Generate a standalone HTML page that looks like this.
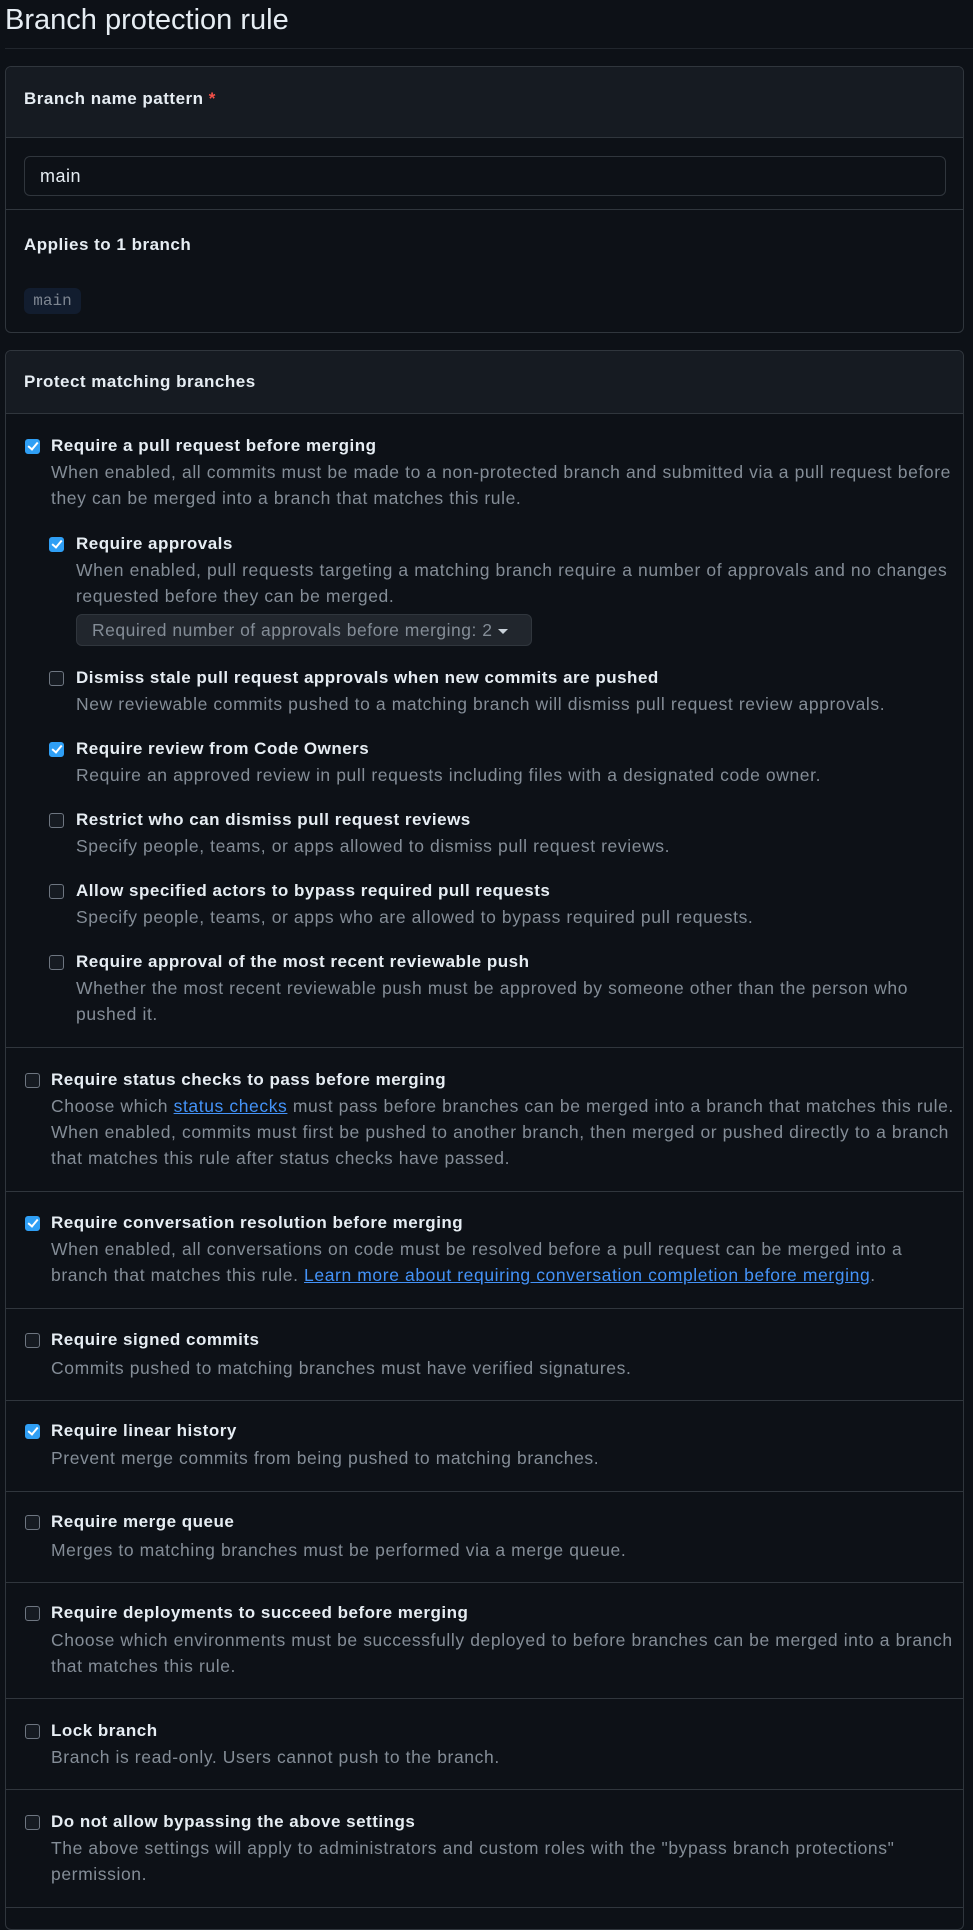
<!DOCTYPE html>
<html><head><meta charset="utf-8"><style>
*{box-sizing:border-box;margin:0;padding:0}
body{width:973px;height:1911px;background:#0d1117;color:#e6edf3;font-family:"Liberation Sans",sans-serif;position:relative;overflow:hidden}
.a{position:absolute;white-space:nowrap}
.t{font-size:17px;font-weight:bold;line-height:26px;letter-spacing:.5px}
.d{font-size:17.5px;color:#848d97;line-height:26px;letter-spacing:.6px}
.cb{position:absolute;width:15px;height:15px;border-radius:3px;border:1.5px solid #6e7681;background:#161b22}
.cb.on{background:#2f9ff5;border-color:#2f9ff5}
.cb.on::after{content:"";position:absolute;left:4px;top:0px;width:4px;height:8px;border:solid #fff;border-width:0 2px 2px 0;transform:rotate(40deg)}
.sep{position:absolute;left:6px;width:957px;height:1px;background:#30363d}
a{color:#4493f8;text-decoration:underline}
</style></head><body>
<div class="a" style="left:5px;top:0;font-size:29px;line-height:40px">Branch protection rule</div>
<div class="sep" style="top:48px;left:5px;width:968px;background:#21262d"></div>

<div style="position:absolute;left:5px;top:66px;width:959px;height:267px;border:1px solid #30363d;border-radius:6px;overflow:hidden">
 <div style="height:71px;background:#161b22;border-bottom:1px solid #30363d"></div>
 <div style="position:absolute;top:142px;left:0;right:0;height:1px;background:#30363d"></div>
</div>
<div class="a t" style="left:24px;top:86px;font-size:17px">Branch name pattern <span style="color:#f85149">*</span></div>
<div style="position:absolute;left:24px;top:156px;width:922px;height:40px;border:1px solid #30363d;border-radius:6px;background:#0d1117"></div>
<div class="a" style="left:40px;top:163px;font-size:18px;line-height:26px;letter-spacing:.5px">main</div>
<div class="a t" style="left:24px;top:232px">Applies to 1 branch</div>
<div class="a" style="left:24px;top:288px;width:57px;height:26px;background:#121d2f;border-radius:6px;font-family:'Liberation Mono',monospace;font-size:16px;color:#7d8590;line-height:26px;text-align:center">main</div>

<div style="position:absolute;left:5px;top:350px;width:959px;height:1580px;border:1px solid #30363d;border-radius:6px;overflow:hidden">
 <div style="height:63px;background:#161b22;border-bottom:1px solid #30363d"></div>
</div>
<div class="a t" style="left:24px;top:369px">Protect matching branches</div>

<div class="cb on" style="left:25px;top:439px"></div>
<div class="a t" style="left:51px;top:433px">Require a pull request before merging</div>
<div class="a d" style="left:51px;top:459px">When enabled, all commits must be made to a non-protected branch and submitted via a pull request before<br>they can be merged into a branch that matches this rule.</div>

<div class="cb on" style="left:49px;top:537px"></div>
<div class="a t" style="left:76px;top:531px">Require approvals</div>
<div class="a d" style="left:76px;top:557px">When enabled, pull requests targeting a matching branch require a number of approvals and no changes<br>requested before they can be merged.</div>
<div style="position:absolute;left:76px;top:614px;width:456px;height:32px;border:1px solid #30363d;border-radius:6px;background:#21262d"></div>
<div class="a" style="left:92px;top:617px;font-size:17.5px;line-height:26px;color:#848d97;letter-spacing:.5px">Required number of approvals before merging: 2 <span style="display:inline-block;border:5px solid transparent;border-top-color:#c9d1d9;border-bottom:0;vertical-align:middle"></span></div>

<div class="cb" style="left:49px;top:671px"></div>
<div class="a t" style="left:76px;top:665px">Dismiss stale pull request approvals when new commits are pushed</div>
<div class="a d" style="left:76px;top:691px">New reviewable commits pushed to a matching branch will dismiss pull request review approvals.</div>

<div class="cb on" style="left:49px;top:742px"></div>
<div class="a t" style="left:76px;top:736px">Require review from Code Owners</div>
<div class="a d" style="left:76px;top:762px">Require an approved review in pull requests including files with a designated code owner.</div>

<div class="cb" style="left:49px;top:813px"></div>
<div class="a t" style="left:76px;top:807px">Restrict who can dismiss pull request reviews</div>
<div class="a d" style="left:76px;top:833px">Specify people, teams, or apps allowed to dismiss pull request reviews.</div>

<div class="cb" style="left:49px;top:884px"></div>
<div class="a t" style="left:76px;top:878px">Allow specified actors to bypass required pull requests</div>
<div class="a d" style="left:76px;top:904px">Specify people, teams, or apps who are allowed to bypass required pull requests.</div>

<div class="cb" style="left:49px;top:955px"></div>
<div class="a t" style="left:76px;top:949px">Require approval of the most recent reviewable push</div>
<div class="a d" style="left:76px;top:975px">Whether the most recent reviewable push must be approved by someone other than the person who<br>pushed it.</div>

<div class="sep" style="top:1047px"></div>
<div class="cb" style="left:25px;top:1073px"></div>
<div class="a t" style="left:51px;top:1067px">Require status checks to pass before merging</div>
<div class="a d" style="left:51px;top:1093px">Choose which <a>status checks</a> must pass before branches can be merged into a branch that matches this rule.<br>When enabled, commits must first be pushed to another branch, then merged or pushed directly to a branch<br>that matches this rule after status checks have passed.</div>

<div class="sep" style="top:1191px"></div>
<div class="cb on" style="left:25px;top:1216px"></div>
<div class="a t" style="left:51px;top:1210px">Require conversation resolution before merging</div>
<div class="a d" style="left:51px;top:1236px">When enabled, all conversations on code must be resolved before a pull request can be merged into a<br>branch that matches this rule. <a>Learn more about requiring conversation completion before merging</a>.</div>

<div class="sep" style="top:1308px"></div>
<div class="cb" style="left:25px;top:1333px"></div>
<div class="a t" style="left:51px;top:1327px">Require signed commits</div>
<div class="a d" style="left:51px;top:1355px">Commits pushed to matching branches must have verified signatures.</div>

<div class="sep" style="top:1400px"></div>
<div class="cb on" style="left:25px;top:1424px"></div>
<div class="a t" style="left:51px;top:1418px">Require linear history</div>
<div class="a d" style="left:51px;top:1445px">Prevent merge commits from being pushed to matching branches.</div>

<div class="sep" style="top:1491px"></div>
<div class="cb" style="left:25px;top:1515px"></div>
<div class="a t" style="left:51px;top:1509px">Require merge queue</div>
<div class="a d" style="left:51px;top:1537px">Merges to matching branches must be performed via a merge queue.</div>

<div class="sep" style="top:1582px"></div>
<div class="cb" style="left:25px;top:1606px"></div>
<div class="a t" style="left:51px;top:1600px">Require deployments to succeed before merging</div>
<div class="a d" style="left:51px;top:1627px">Choose which environments must be successfully deployed to before branches can be merged into a branch<br>that matches this rule.</div>

<div class="sep" style="top:1698px"></div>
<div class="cb" style="left:25px;top:1724px"></div>
<div class="a t" style="left:51px;top:1718px">Lock branch</div>
<div class="a d" style="left:51px;top:1744px">Branch is read-only. Users cannot push to the branch.</div>

<div class="sep" style="top:1789px"></div>
<div class="cb" style="left:25px;top:1815px"></div>
<div class="a t" style="left:51px;top:1809px">Do not allow bypassing the above settings</div>
<div class="a d" style="left:51px;top:1835px">The above settings will apply to administrators and custom roles with the "bypass branch protections"<br>permission.</div>

<div class="sep" style="top:1907px"></div>
</body></html>
